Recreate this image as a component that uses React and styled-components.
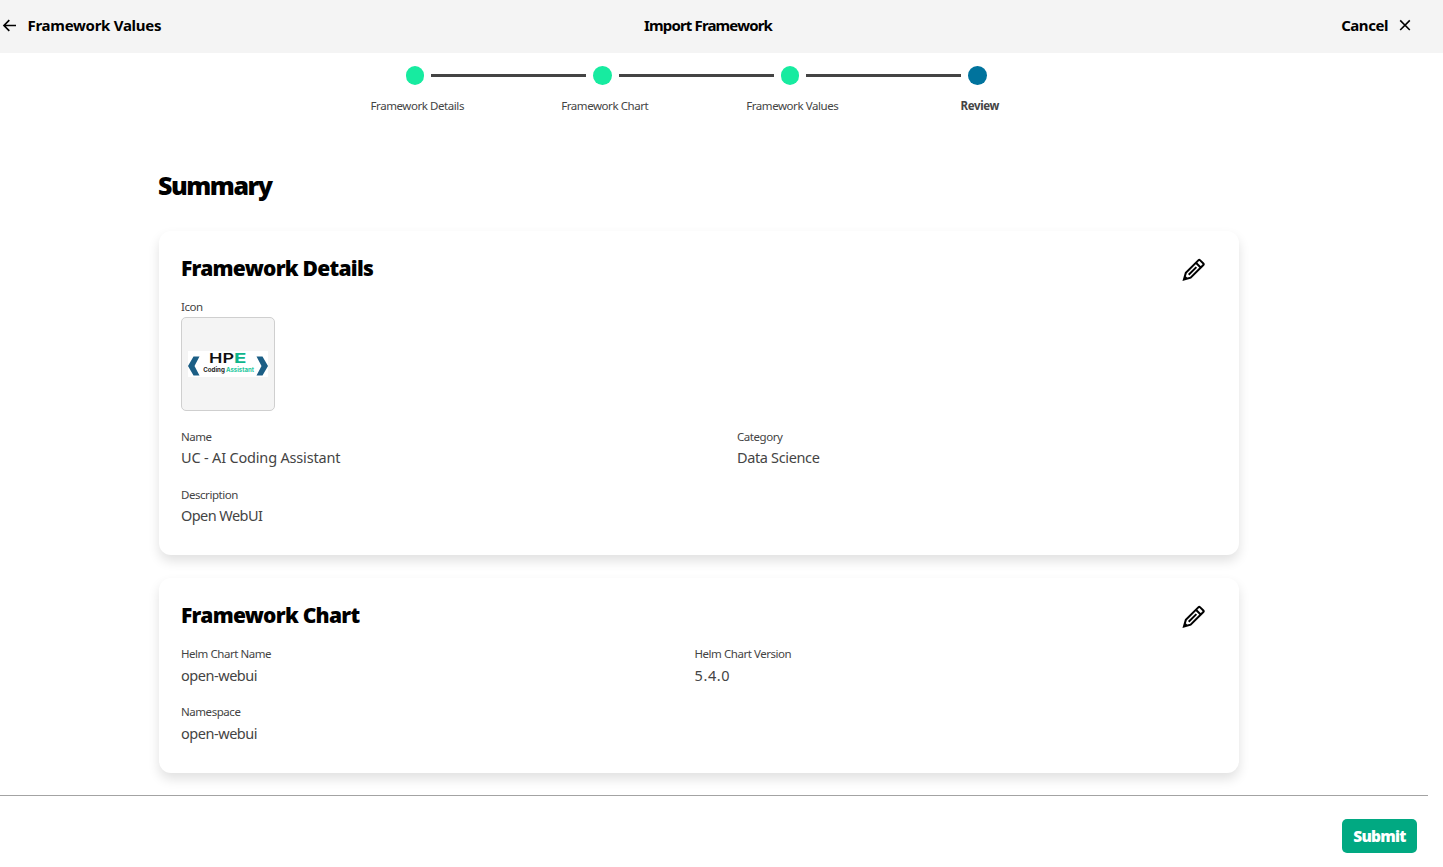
import React from "react";
import styled, { createGlobalStyle } from "styled-components";

const Global = createGlobalStyle`
  * { box-sizing: border-box; }
  body { margin: 0; background: #fff; color: #444; font-family: "Noto Sans", "Open Sans", sans-serif; overflow: hidden; }
`;

const Page = styled.div`
  height: 867px;
  display: flex;
  flex-direction: column;
`;

const Header = styled.header`
  height: 53px;
  flex: none;
  padding: 0 32px 3px 2px;
  background: #f4f4f4;
  display: grid;
  grid-template-columns: 600px 212px 1fr;
  align-items: center;
  color: #000;
`;

const HeaderText = styled.span`
  font-size: 15px;
  font-weight: 700;
  line-height: 24px;
  white-space: nowrap;
  letter-spacing: ${(p) => p.$track}px;
`;

const HeaderAction = styled.div`
  display: flex;
  align-items: center;
  gap: ${(p) => p.$gap}px;
  justify-content: ${(p) => (p.$end ? "flex-end" : "flex-start")};
`;

const HeaderTitle = styled.div`
  display: flex;
  justify-content: center;
`;

const Rail = styled.div`
  display: flex;
  align-items: center;
  height: 19px;
  margin-top: 13px;
  padding-left: 405.5px;
`;

const Dot = styled.span`
  flex: none;
  width: 18.75px;
  height: 19px;
  border-radius: 50%;
  background: ${(p) => (p.$current ? "#00739d" : "#17eba0")};
`;

const Connector = styled.span`
  flex: none;
  width: 155px;
  height: 3px;
  margin: 0 7px 0 6.75px;
  background: #444;
`;

const StepLabels = styled.div`
  display: grid;
  grid-template-columns: repeat(4, 187.5px);
  padding-left: 323.5px;
  margin-top: 12px;
`;

const StepLabel = styled.span`
  text-align: center;
  font-size: 11.5px;
  line-height: 18px;
  letter-spacing: ${(p) => (p.$current ? -0.35 : -0.43)}px;
  font-weight: ${(p) => (p.$current ? 700 : 400)};
`;

const Main = styled.main`
  width: 1080px;
  margin: 52px 0 0 159px;
  display: flex;
  flex-direction: column;
`;

const PageTitle = styled.h1`
  margin: 0 0 28px -1px;
  font-size: 25px;
  line-height: 36px;
  font-weight: 900;
  letter-spacing: -1.45px;
  color: #000;
`;

const Card = styled.section`
  padding: 23px 22px ${(p) => p.$bottom}px;
  margin-bottom: 23px;
  border-radius: 12px;
  background: #fff;
  box-shadow: 0 6px 12px rgba(0, 0, 0, 0.12);
`;

const CardHead = styled.div`
  display: flex;
  justify-content: space-between;
  height: 28px;
  margin-bottom: 16px;
  padding-right: 12px;
`;

const CardTitle = styled.h2`
  margin: 0;
  font-size: 21px;
  line-height: 28px;
  font-weight: 900;
  letter-spacing: ${(p) => p.$track}px;
  color: #000;
`;

const Fields = styled.div`
  display: grid;
  grid-template-columns: ${(p) => p.$first}px 1fr;
  row-gap: 16px;
`;

const Label = styled.div`
  font-size: 11.5px;
  line-height: 18px;
  letter-spacing: -0.45px;
`;

const Value = styled.div`
  font-size: 14.5px;
  line-height: ${(p) => (p.$tight ? 22 : 24)}px;
  margin-bottom: ${(p) => (p.$tight ? 2 : 0)}px;
  letter-spacing: ${(p) => p.$track}px;
`;

const Thumb = styled.div`
  width: 94px;
  height: 94px;
  margin: 1px 0 17px;
  display: grid;
  place-items: center;
  border: 1px solid #cfcfcf;
  border-radius: 5px;
  background: #f4f4f4;
`;

const Footer = styled.footer`
  width: 1428px;
  flex: 1;
  margin-top: -1px;
  border-top: 1px solid #a3a3a3;
  padding: 23px 11px 0 0;
  display: flex;
  justify-content: flex-end;
  align-items: flex-start;
`;

const Submit = styled.button`
  width: 75px;
  height: 34px;
  padding: 0;
  border: 0;
  border-radius: 5px;
  background: #01a982;
  color: #fff;
  font-family: inherit;
  font-size: 15.5px;
  font-weight: 900;
  letter-spacing: -0.75px;
`;

const BackIcon = () => (
  <svg width="15" height="14" viewBox="0 0 15 14" fill="none" stroke="#000" strokeWidth="1.7">
    <path d="M14 7.5H2M7.3 2.2 2 7.5l5.3 5.3" />
  </svg>
);

const CloseIcon = () => (
  <svg width="12" height="12" viewBox="0 0 12 12" fill="none" stroke="#000" strokeWidth="1.6">
    <path d="M1.2 1.4l9.6 9.6M10.8 1.4l-9.6 9.6" />
  </svg>
);

const EditSvg = styled.svg`
  flex: none;
  margin-top: 4px;
`;

const EditIcon = () => (
  <EditSvg width="23" height="24" viewBox="0 0 24 24" fill="none" stroke="#000" strokeWidth="2.1">
    <path d="M14 4l6 6M22.294 5.294c.39.39.387 1.025-.008 1.42L9 20l-7 2 2-7L17.286 1.714c.395-.395 1.027-.401 1.42-.008l3.588 3.588zM3 19l2 2M7 17l8-8" />
  </EditSvg>
);

const LogoSvg = styled.svg`
  overflow: visible;
`;

const Logo = () => (
  <LogoSvg width="80" height="26" viewBox="0 0 80 26">
    <rect width="80" height="26" fill="#fff" />
    <path d="M5.5 5.6H11.5L6.5 15 11.5 24.4H5.5L0 15z" fill="#1b5e85" />
    <path d="M74.5 5.6H68.5L73.5 15 68.5 24.4H74.5L80 15z" fill="#1b5e85" />
    <g fontFamily="Inter, sans-serif">
      <text x="21" y="12.4" fontSize="13.5" fontWeight="600" fill="#111" textLength="25" lengthAdjust="spacingAndGlyphs">HP</text>
      <text x="46" y="12.4" fontSize="13.5" fontWeight="700" fill="#0fb58c" textLength="12.4" lengthAdjust="spacingAndGlyphs">E</text>
      <text x="15.2" y="20.8" fontSize="6.2" fontWeight="700" fill="#222" textLength="21.6" lengthAdjust="spacingAndGlyphs">Coding</text>
      <text x="38" y="20.8" fontSize="6.2" fontWeight="700" fill="#1cc79b" textLength="28" lengthAdjust="spacingAndGlyphs">Assistant</text>
    </g>
  </LogoSvg>
);

const Field = ({ label, value, track, tight }) => (
  <div>
    <Label>{label}</Label>
    <Value $track={track} $tight={tight}>{value}</Value>
  </div>
);

const SummaryCard = ({ title, track, bottom, children }) => (
  <Card $bottom={bottom}>
    <CardHead>
      <CardTitle $track={track}>{title}</CardTitle>
      <EditIcon />
    </CardHead>
    {children}
  </Card>
);

export default function App() {
  return (
    <Page>
      <Global />
      <Header>
        <HeaderAction $gap={10.5}>
          <BackIcon />
          <HeaderText $track={-0.28}>Framework Values</HeaderText>
        </HeaderAction>
        <HeaderTitle>
          <HeaderText $track={-0.85}>Import Framework</HeaderText>
        </HeaderTitle>
        <HeaderAction $gap={11} $end>
          <HeaderText $track={-0.45}>Cancel</HeaderText>
          <CloseIcon />
        </HeaderAction>
      </Header>
      <Rail>
        <Dot />
        <Connector />
        <Dot />
        <Connector />
        <Dot />
        <Connector />
        <Dot $current />
      </Rail>
      <StepLabels>
        <StepLabel>Framework Details</StepLabel>
        <StepLabel>Framework Chart</StepLabel>
        <StepLabel>Framework Values</StepLabel>
        <StepLabel $current>Review</StepLabel>
      </StepLabels>
      <Main>
        <PageTitle>Summary</PageTitle>
        <SummaryCard title="Framework Details" track={-0.74} bottom={27}>
          <Label>Icon</Label>
          <Thumb>
            <Logo />
          </Thumb>
          <Fields $first={556}>
            <Field label="Name" value="UC - AI Coding Assistant" track={-0.18} tight />
            <Field label="Category" value="Data Science" track={-0.36} tight />
            <Field label="Description" value="Open WebUI" track={-0.57} tight />
          </Fields>
        </SummaryCard>
        <SummaryCard title="Framework Chart" track={-0.73} bottom={28}>
          <Fields $first={513.5}>
            <Field label="Helm Chart Name" value="open-webui" track={-0.46} />
            <Field label="Helm Chart Version" value="5.4.0" track={0.6} />
            <Field label="Namespace" value="open-webui" track={-0.46} />
          </Fields>
        </SummaryCard>
      </Main>
      <Footer>
        <Submit>Submit</Submit>
      </Footer>
    </Page>
  );
}
